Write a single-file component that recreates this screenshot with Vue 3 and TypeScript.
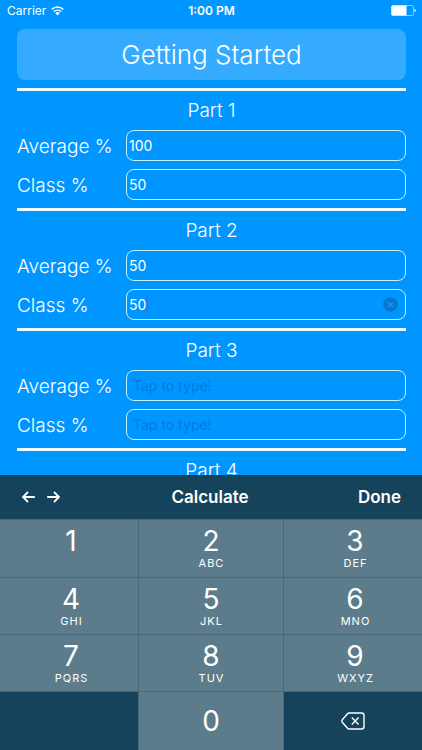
<script setup lang="ts">
import { reactive } from 'vue'

interface Part {
  id: number
  average: string
  weight: string
  active?: boolean
}

interface Key {
  digit: string
  letters: string
}

const parts = reactive<Part[]>([
  { id: 1, average: '100', weight: '50' },
  { id: 2, average: '50', weight: '50', active: true },
  { id: 3, average: '', weight: '' },
  { id: 4, average: '', weight: '' },
])

const keys: Key[] = [
  { digit: '1', letters: '' },
  { digit: '2', letters: 'ABC' },
  { digit: '3', letters: 'DEF' },
  { digit: '4', letters: 'GHI' },
  { digit: '5', letters: 'JKL' },
  { digit: '6', letters: 'MNO' },
  { digit: '7', letters: 'PQRS' },
  { digit: '8', letters: 'TUV' },
  { digit: '9', letters: 'WXYZ' },
]

function activePart(): Part | undefined {
  return parts.find((p) => p.active)
}

function press(digit: string) {
  const part = activePart()
  if (part) part.weight += digit
}

function erase() {
  const part = activePart()
  if (part) part.weight = part.weight.slice(0, -1)
}
</script>

<template>
  <div class="screen">
    <header class="status">
      <span class="carrier">
        Carrier
        <svg width="13" height="10" viewBox="0 0 13 10" aria-hidden="true">
          <g fill="none" stroke="#fff" stroke-width="1.5">
            <path d="M0.8 3.4A8.2 8.2 0 0 1 12.2 3.4" />
            <path d="M2.9 5.6A5.2 5.2 0 0 1 10.1 5.6" />
          </g>
          <path d="M6.5 9.4L4.3 7.1A3.2 3.2 0 0 1 8.7 7.1Z" fill="#fff" />
        </svg>
      </span>
      <span class="time">1:00 PM</span>
      <svg class="battery" width="25" height="11" viewBox="0 0 25 11" aria-hidden="true">
        <rect x="0.5" y="0.5" width="22" height="10" rx="1.5" fill="none" stroke="#fff" stroke-opacity="0.5" />
        <path d="M1.5 0.5H15.5V10.5H1.5Q0.5 10.5 0.5 9.5V1.5Q0.5 0.5 1.5 0.5Z" fill="#fff" />
        <path d="M23.5 4Q24.8 4.4 24.8 5.5T23.5 7Z" fill="#fff" />
      </svg>
    </header>

    <main class="content">
      <button type="button" class="start">Getting Started</button>

      <section v-for="part in parts" :key="part.id" class="part">
        <h2>Part {{ part.id }}</h2>
        <div class="row">
          <label :for="`average-${part.id}`">Average %</label>
          <input :id="`average-${part.id}`" v-model="part.average" type="text" inputmode="numeric" placeholder="Tap to type!" />
        </div>
        <div class="row">
          <label :for="`class-${part.id}`">Class %</label>
          <div class="field">
            <input :id="`class-${part.id}`" v-model="part.weight" type="text" inputmode="numeric" placeholder="Tap to type!" />
            <span v-if="part.active" class="caret"></span>
            <button v-if="part.active" type="button" class="clear" aria-label="Clear" @click="part.weight = ''">
              <svg width="15" height="15" viewBox="0 0 15 15">
                <circle cx="7.5" cy="7.5" r="7.3" fill="#0678cc" />
                <path d="M4.7 4.7L10.3 10.3M10.3 4.7L4.7 10.3" stroke="#0c94f6" stroke-width="1.6" />
              </svg>
            </button>
          </div>
        </div>
      </section>
    </main>

    <footer class="keyboard">
      <div class="toolbar">
        <div class="arrows">
          <button type="button" aria-label="Previous field">
            <svg width="13" height="12" viewBox="0 0 13 12">
              <path d="M12.8 6H1.2M6 1L1 6L6 11" fill="none" stroke="#fff" stroke-width="1.8" />
            </svg>
          </button>
          <button type="button" aria-label="Next field">
            <svg width="13" height="12" viewBox="0 0 13 12">
              <path d="M0.2 6H11.8M7 1L12 6L7 11" fill="none" stroke="#fff" stroke-width="1.8" />
            </svg>
          </button>
        </div>
        <button type="button" class="calculate">Calculate</button>
        <button type="button" class="done">Done</button>
      </div>
      <div class="pad">
        <button v-for="key in keys" :key="key.digit" type="button" class="key" @click="press(key.digit)">
          <span class="digit">{{ key.digit }}</span>
          <span v-if="key.letters" class="letters">{{ key.letters }}</span>
        </button>
        <div class="blank"></div>
        <button type="button" class="key zero" @click="press('0')"><span class="digit">0</span></button>
        <button type="button" class="key erase" aria-label="Delete" @click="erase">
          <svg width="24" height="18" viewBox="0 0 24 18" fill="none" stroke="#fff">
            <path d="M8.2 1H20.5Q23 1 23 3.5V14.5Q23 17 20.5 17H8.2Q7.2 17 6.5 16.2L1.3 10.2Q0.4 9 1.3 7.8L6.5 1.8Q7.2 1 8.2 1Z" stroke-width="1.4" />
            <path d="M10.8 5.6L17.6 12.4M17.6 5.6L10.8 12.4" stroke-width="1.4" />
          </svg>
        </button>
      </div>
    </footer>
  </div>
</template>

<style>
body {
  margin: 0;
}
</style>

<style scoped>
.screen {
  display: flex;
  flex-direction: column;
  height: 100vh;
  overflow: hidden;
  background: #0096ff;
  color: #fff;
  font-family: Inter, "Liberation Sans", sans-serif;
}

button,
input {
  margin: 0;
  padding: 0;
  border: 0;
  background: none;
  color: inherit;
  font: inherit;
}

svg {
  display: block;
}

.status {
  display: grid;
  grid-template-columns: 1fr auto 1fr;
  align-items: center;
  flex: none;
  height: 21px;
  padding: 0 6px 0 7px;
  font-size: 12px;
}

.carrier {
  display: flex;
  align-items: center;
  gap: 5px;
}

.time {
  font-weight: 600;
}

.battery {
  justify-self: end;
}

.content {
  flex: 1;
  min-height: 0;
  overflow: hidden;
  padding: 8px 16px 0 17px;
}

.start {
  display: block;
  width: 100%;
  height: 51px;
  margin-bottom: 8px;
  border-radius: 8px;
  background: #35abff;
  font-size: 26px;
  font-weight: 300;
}

.part {
  display: flex;
  flex-direction: column;
  gap: 8px;
  padding-bottom: 8px;
  border-top: 3px solid #f0fbff;
}

.part h2 {
  margin: 0;
  height: 31px;
  font-size: 19px;
  font-weight: 300;
  line-height: 39px;
  text-align: center;
}

.row {
  display: grid;
  grid-template-columns: 109px 1fr;
  align-items: center;
  height: 31px;
  font-size: 19px;
  font-weight: 300;
}

.row label {
  padding-top: 2px;
}

.field {
  position: relative;
}

.row input {
  display: block;
  box-sizing: border-box;
  width: 100%;
  height: 31px;
  padding: 0 30px 1px 2px;
  border: 1px solid #c4f0ff;
  border-radius: 8px;
  outline: none;
  font-size: 14px;
  font-weight: 400;
}

.row input:placeholder-shown {
  padding-left: 6px;
}

.row input::placeholder {
  color: #007cdb;
  opacity: 1;
}

.caret {
  position: absolute;
  top: 7px;
  left: 20px;
  width: 2px;
  height: 17px;
  background: #2878f4;
}

.clear {
  position: absolute;
  top: 8px;
  right: 8px;
}

.keyboard {
  flex: none;
  background: #15435b;
}

.toolbar {
  display: grid;
  grid-template-columns: 1fr auto 1fr;
  align-items: center;
  height: 44px;
  padding: 0 21px 0 19px;
  font-size: 17px;
  font-weight: 600;
}

.arrows {
  display: flex;
  gap: 12px;
  padding-left: 3px;
}

.done {
  justify-self: end;
}

.pad {
  display: grid;
  grid-template-columns: 138fr 144fr 138fr;
  grid-template-rows: 57px 56px 56px 58px;
  gap: 1px;
  padding-top: 1px;
  background: #456a7c;
}

.key {
  display: flex;
  flex-direction: column;
  align-items: center;
  padding: 4px 0 0 4px;
  background: #5c7c8b;
}

.key:nth-child(3n + 2) {
  padding-left: 0;
}

.digit {
  font-size: 28px;
  line-height: 34px;
}

.letters {
  padding-left: 1px;
  font-size: 11px;
  line-height: 11px;
  letter-spacing: 1px;
}

.blank,
.erase {
  background: #15435b;
}

.zero,
.erase {
  justify-content: center;
  padding: 0 0 1px;
}
</style>
